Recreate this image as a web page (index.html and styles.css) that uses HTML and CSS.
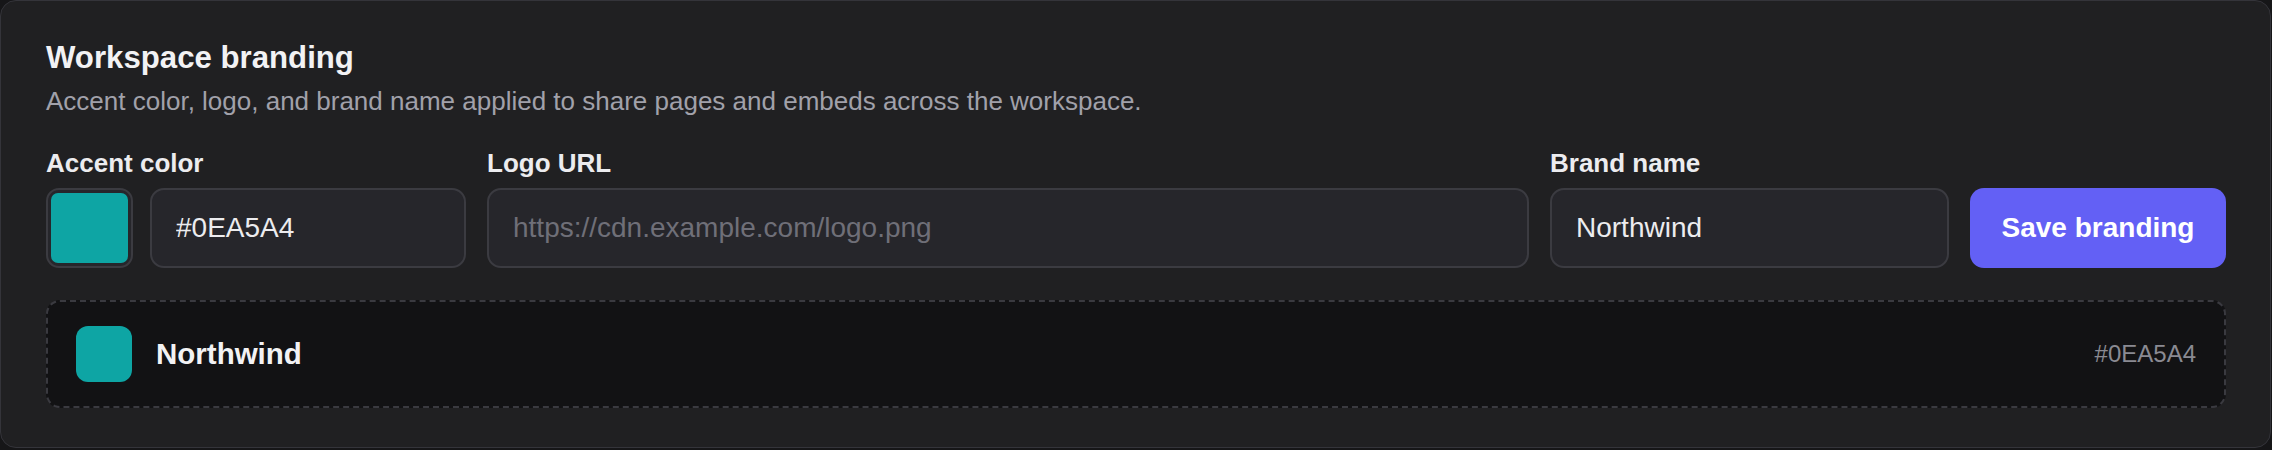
FILE: index.html
```html
<!DOCTYPE html>
<html lang="en">
<head>
<meta charset="utf-8">
<title>Workspace branding</title>
<link rel="stylesheet" href="styles.css">
</head>
<body>
  <section class="card">
    <h2 class="title">Workspace branding</h2>
    <p class="desc">Accent color, logo, and brand name applied to share pages and embeds across the workspace.</p>
    <div class="form">
      <div class="field">
        <label class="label">Accent color</label>
        <div class="color-row">
          <div class="swatch"><span class="swatch-fill"></span></div>
          <input class="input" type="text" value="#0EA5A4">
        </div>
      </div>
      <div class="field">
        <label class="label">Logo URL</label>
        <input class="input" type="text" placeholder="https://cdn.example.com/logo.png">
      </div>
      <div class="field">
        <label class="label">Brand name</label>
        <input class="input" type="text" value="Northwind">
      </div>
      <button class="btn" type="button">Save branding</button>
    </div>
    <div class="preview">
      <span class="preview-swatch"></span>
      <span class="preview-name">Northwind</span>
      <span class="preview-hex">#0EA5A4</span>
    </div>
  </section>
</body>
</html>
```
FILE: styles.css
```css
* { box-sizing: border-box; }

html, body {
  margin: 0;
  background: #161618;
  font-family: "Liberation Sans", Arial, sans-serif;
}

.card {
  width: 2271px;
  height: 448px;
  background: #202022;
  border: 1px solid #34343a;
  border-radius: 16px;
  padding: 39px 44px 39px 45px;
}

.title {
  margin: 0;
  font-size: 31.2px;
  line-height: 36px;
  font-weight: 700;
  color: #f2f2f4;
}

.desc {
  margin: 7px 0 0;
  font-size: 26px;
  line-height: 36px;
  color: #a1a1aa;
}

.form {
  margin-top: 26px;
  display: grid;
  grid-template-columns: 420px 1fr 399px 256px;
  column-gap: 21px;
  align-items: end;
}

.field {
  display: flex;
  flex-direction: column;
  min-width: 0;
}

.label {
  font-size: 26px;
  line-height: 36px;
  font-weight: 700;
  color: #ececef;
  margin-bottom: 7px;
}

.color-row {
  display: flex;
  gap: 17px;
}

.swatch {
  flex: 0 0 87px;
  height: 80px;
  border: 2px solid #3b3b41;
  border-radius: 13px;
  background: #26262b;
  padding: 3px;
  display: flex;
}

.swatch-fill {
  flex: 1;
  background: #0ea5a4;
  border-radius: 7px;
}

.input {
  width: 100%;
  min-width: 0;
  height: 80px;
  background: #26262b;
  border: 2px solid #3b3b41;
  border-radius: 14px;
  padding: 0 24px;
  font-family: "Liberation Sans", Arial, sans-serif;
  font-size: 28px;
  color: #ececef;
  outline: none;
}

.input::placeholder {
  color: #6f6f78;
}

.btn {
  height: 80px;
  width: 256px;
  border: none;
  border-radius: 14px;
  background: #6360f5;
  color: #ffffff;
  font-family: "Liberation Sans", Arial, sans-serif;
  font-size: 28px;
  font-weight: 700;
  padding: 0;
}

.preview {
  margin-top: 32px;
  height: 108px;
  background: #121214;
  border: 2px dashed #3a3a40;
  border-radius: 14px;
  padding: 0 28px;
  display: flex;
  align-items: center;
}

.preview-swatch {
  width: 56px;
  height: 56px;
  border-radius: 12px;
  background: #0ea5a4;
  flex: 0 0 56px;
}

.preview-name {
  margin-left: 24px;
  font-size: 29.5px;
  font-weight: 700;
  color: #f2f2f4;
}

.preview-hex {
  margin-left: auto;
  font-size: 24px;
  color: #8a8a92;
}
```
